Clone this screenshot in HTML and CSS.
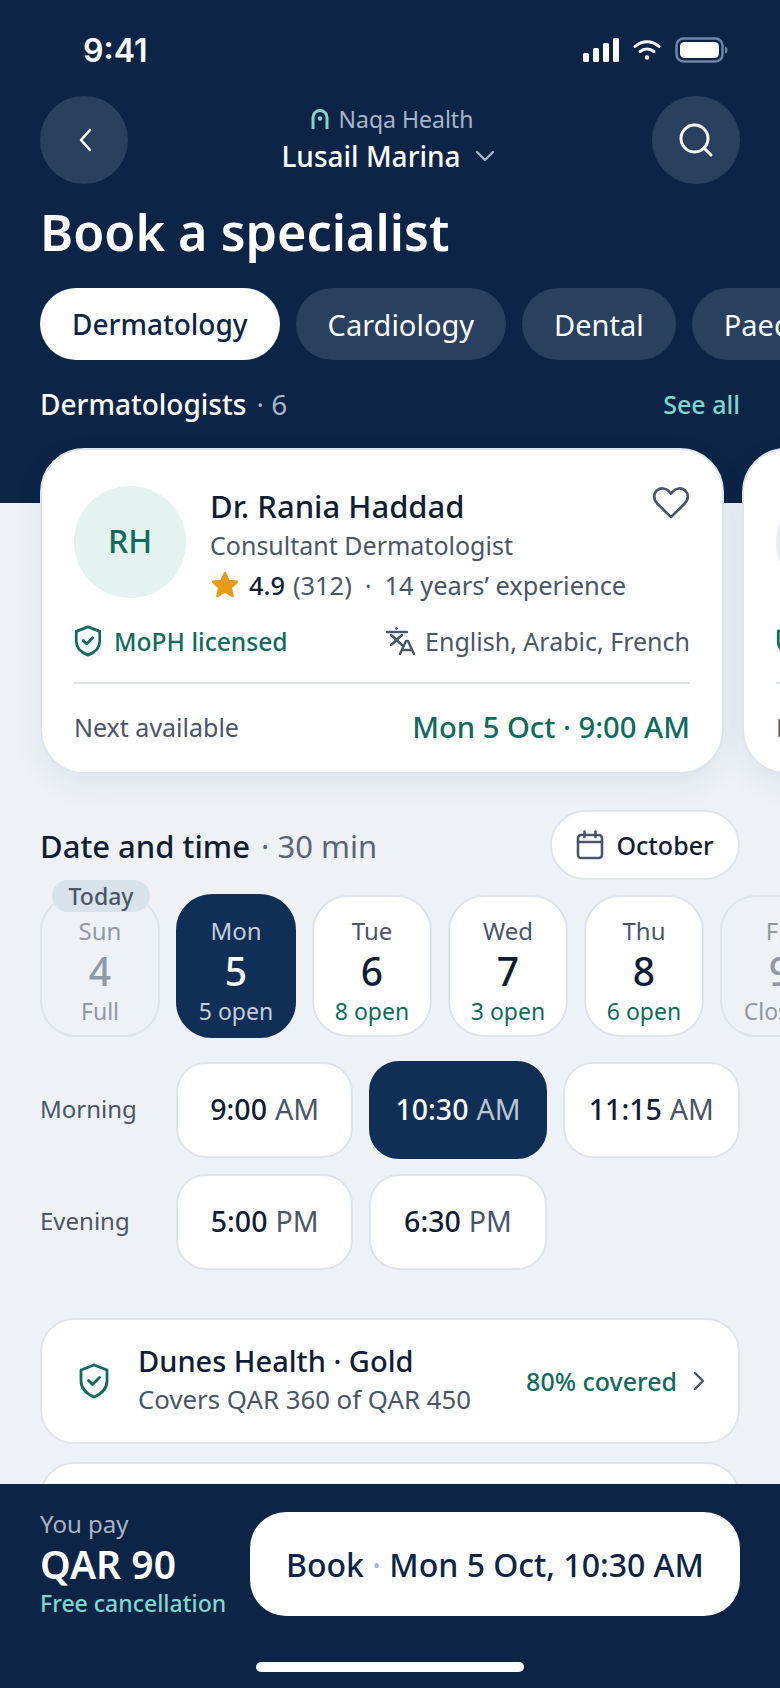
FILE: index.html
```html
<!DOCTYPE html>
<html lang="en">
<head>
<meta charset="utf-8">
<title>Book a specialist</title>
<link rel="stylesheet" href="styles.css">
</head>
<body>
<div class="app">
  <main class="scroll">
    <section class="hero">
      <div class="status">
        <span class="clock">9:41</span>
        <div class="status-icons">
          <svg width="36" height="24" viewBox="0 0 36 24" fill="#fff"><rect x="0" y="15" width="6" height="9" rx="1.5"/><rect x="10" y="10" width="6" height="14" rx="1.5"/><rect x="20" y="5" width="6" height="19" rx="1.5"/><rect x="30" y="0" width="6" height="24" rx="1.5"/></svg>
          <svg width="28" height="22" viewBox="0 0 28 22" fill="none" stroke="#fff" stroke-width="3" stroke-linecap="round"><path d="M2 7.5C9 1 19 1 26 7.5"/><path d="M7 12.5c4-3.500 10-3.500 14 0"/><circle cx="14" cy="18.500" r="1.500" fill="#fff" stroke-width="1.500"/></svg>
          <svg width="54" height="26" viewBox="0 0 54 26"><rect x="1.500" y="1.500" width="46" height="23" rx="7" fill="none" stroke="#6f86a6" stroke-width="2.500"/><rect x="5" y="5" width="39" height="16" rx="4.500" fill="#fff"/><path d="M50 9.500c2 .5 2.500 2 2.500 3.500s-.5 3-2.500 3.500z" fill="#6f86a6"/></svg>
        </div>
      </div>

      <div class="nav">
        <button class="round-btn" type="button" aria-label="Back">
          <svg class="back-icon" width="32" height="32" viewBox="0 0 32 32" fill="none" stroke="#fff" stroke-width="2.600" stroke-linecap="round" stroke-linejoin="round"><path d="M20 6 11 16l9 10"/></svg>
        </button>
        <div class="nav-center">
          <div class="brand">
            <svg width="18" height="22" viewBox="0 0 18 22" fill="none" stroke="#7fd6cf" stroke-width="3"><path d="M2 21V9.500a7 7 0 0 1 14 0V21"/><circle cx="9" cy="10.500" r="2.200" fill="#7fd6cf" stroke="none"/></svg>
            <span>Naqa Health</span>
          </div>
          <div class="place">
            <span>Lusail Marina</span>
            <svg width="20" height="14" viewBox="0 0 20 14" fill="none" stroke="#a7b5c9" stroke-width="2.400" stroke-linecap="round" stroke-linejoin="round"><path d="M2 3l8 8 8-8"/></svg>
          </div>
        </div>
        <button class="round-btn" type="button" aria-label="Search">
          <svg width="36" height="36" viewBox="0 0 36 36" fill="none" stroke="#fff" stroke-width="3" stroke-linecap="round"><circle cx="16.500" cy="16.500" r="13.500"/><path d="m26 26 7 7"/></svg>
        </button>
      </div>

      <h1 class="title">Book a specialist</h1>

      <div class="chips">
        <span class="chip chip-on">Dermatology</span>
        <span class="chip">Cardiology</span>
        <span class="chip">Dental</span>
        <span class="chip">Paediatrics</span>
      </div>

      <div class="list-head">
        <span class="list-title">Dermatologists <span class="list-count">· 6</span></span>
        <span class="see-all">See all</span>
      </div>
    </section>

    <section class="carousel">
      <article class="doc-card">
        <div class="doc-top">
          <div class="avatar">RH</div>
          <div class="doc-info">
            <div class="doc-name">Dr. Rania Haddad</div>
            <div class="doc-spec">Consultant Dermatologist</div>
            <div class="doc-rate">
              <svg width="30" height="30" viewBox="0 0 30 30" fill="#e69c17" stroke="#e69c17" stroke-width="2.500" stroke-linejoin="round"><path d="m15 3 3.600 8 8.400.8-6.300 5.700 1.900 8.500-7.600-4.500L7.400 26l1.900-8.500L3 11.800l8.400-.8z"/></svg>
              <b>4.9</b><span class="rate-count">(312)</span><span class="rate-sep">·</span><span>14 years’ experience</span>
            </div>
          </div>
          <svg class="heart" width="38" height="34" viewBox="0 0 40 36" fill="none" stroke="#4a5568" stroke-width="2.800" stroke-linejoin="round"><path d="M20 33 5.500 18.500C1 14 1.500 8 5 4.800c4-3.400 9.500-2.800 13 1L20 8l2-2.200c3.500-3.800 9-4.400 13-1 3.500 3.200 4 9.200-.5 13.700z"/></svg>
        </div>
        <div class="doc-meta">
          <div class="licence">
            <svg width="28" height="32" viewBox="0 0 26 30" fill="none" stroke="#0f6b5c" stroke-width="2.600" stroke-linecap="round" stroke-linejoin="round"><path d="M13 1.800 24 6v9c0 6.500-4.500 10.800-11 13.200C6.500 25.800 2 21.500 2 15V6z"/><path d="m8.500 14.500 3.200 3.200 5.800-5.700"/></svg>
            <span>MoPH licensed</span>
          </div>
          <div class="langs">
            <svg width="30" height="28" viewBox="0 0 30 28" fill="none" stroke="#4a5568" stroke-width="2.400" stroke-linecap="round" stroke-linejoin="round"><path d="M1 5h20"/><circle cx="10.500" cy="1.500" r="1" fill="#4a5568" stroke-width="1"/><path d="m5 8 11 10M16 8 5 18"/><path d="m14 27 6-13h2l6 13M16 23h10"/></svg>
            <span>English, Arabic, French</span>
          </div>
        </div>
        <div class="doc-next">
          <span class="next-label">Next available</span>
          <span class="next-date">Mon 5 Oct · 9:00 AM</span>
        </div>
      </article>

      <article class="doc-card">
        <div class="doc-top">
          <div class="avatar avatar-blue"></div>
        </div>
        <div class="doc-meta">
          <div class="licence">
            <svg width="28" height="32" viewBox="0 0 26 30" fill="none" stroke="#0f6b5c" stroke-width="2.600" stroke-linejoin="round"><path d="M13 1.800 24 6v9c0 6.500-4.500 10.800-11 13.200C6.500 25.800 2 21.500 2 15V6z"/></svg>
          </div>
        </div>
        <div class="doc-next">
          <span class="next-label">Next available</span>
        </div>
      </article>
    </section>

    <section class="schedule">
      <div class="date-head">
        <h2 class="date-title">Date and time <span class="date-dur">· 30 min</span></h2>
        <button class="month" type="button">
          <svg width="28" height="30" viewBox="0 0 28 30" fill="none" stroke="#4a5568" stroke-width="2.600" stroke-linecap="round" stroke-linejoin="round"><rect x="2" y="5" width="24" height="23" rx="3"/><path d="M2 12h24M8.500 1.500V7M19.500 1.500V7"/></svg>
          <span>October</span>
        </button>
      </div>

      <div class="days">
        <div class="day day-off"><span class="today">Today</span><span class="d-name">Sun</span><span class="d-num">4</span><span class="d-sub">Full</span></div>
        <div class="day day-on"><span class="d-name">Mon</span><span class="d-num">5</span><span class="d-sub">5 open</span></div>
        <div class="day"><span class="d-name">Tue</span><span class="d-num">6</span><span class="d-sub">8 open</span></div>
        <div class="day"><span class="d-name">Wed</span><span class="d-num">7</span><span class="d-sub">3 open</span></div>
        <div class="day"><span class="d-name">Thu</span><span class="d-num">8</span><span class="d-sub">6 open</span></div>
        <div class="day day-off"><span class="d-name">Fri</span><span class="d-num">9</span><span class="d-sub">Closed</span></div>
      </div>

      <div class="times">
        <span class="t-label">Morning</span>
        <div class="slot"><b>9:00</b> AM</div>
        <div class="slot slot-on"><b>10:30</b> AM</div>
        <div class="slot"><b>11:15</b> AM</div>
        <span class="t-label">Evening</span>
        <div class="slot"><b>5:00</b> PM</div>
        <div class="slot"><b>6:30</b> PM</div>
      </div>

      <div class="ins-card">
        <svg width="32" height="36" viewBox="0 0 32 36" fill="none" stroke="#0f6b5c" stroke-width="2.800" stroke-linecap="round" stroke-linejoin="round"><path d="M16 2 29 7v11c0 7.500-5.500 12.800-13 16C8.500 30.800 3 25.500 3 18V7z"/><path d="m10.500 17.500 4 4 7-7"/></svg>
        <div class="ins-text">
          <div class="ins-name">Dunes Health · Gold</div>
          <div class="ins-sub">Covers QAR 360 of QAR 450</div>
        </div>
        <span class="ins-cover">80% covered</span>
        <svg width="12" height="20" viewBox="0 0 12 20" fill="none" stroke="#4a5568" stroke-width="2.400" stroke-linecap="round" stroke-linejoin="round"><path d="m2 2 8 8-8 8"/></svg>
      </div>
      <div class="ins-card"></div>
    </section>
  </main>

  <footer class="footer">
    <div class="pay-row">
      <div class="pay">
        <span class="pay-label">You pay</span>
        <span class="pay-amount">QAR 90</span>
        <span class="pay-note">Free cancellation</span>
      </div>
      <button class="book" type="button">Book <span class="book-dot">·</span> Mon 5 Oct, 10:30 AM</button>
    </div>
    <div class="home-bar"></div>
  </footer>
</div>
</body>
</html>
```

FILE: styles.css
```css
* { box-sizing: border-box; }
html, body { margin: 0; padding: 0; }
body { font-family: "Noto Sans", "Liberation Sans", sans-serif; color: #0f1d33; background: #eef2f6; }
button { font-family: inherit; border: 0; padding: 0; }
h1, h2 { margin: 0; }

.app { width: 780px; height: 1688px; display: flex; flex-direction: column; overflow: hidden; background: #eef2f6; }
.scroll { flex: 1; min-height: 0; overflow: hidden; }

.hero { height: 503px; background: #0c2546; padding: 0 40px; color: #fff; }
.status { height: 96px; display: flex; justify-content: space-between; align-items: center; padding: 4px 11px 0 43px; }
.clock { font-family: Inter, "Liberation Sans", sans-serif; font-size: 32px; font-weight: 600; }
.status-icons { display: flex; align-items: center; gap: 14px; }

.nav { display: flex; justify-content: space-between; align-items: center; height: 88px; }
.round-btn { width: 88px; height: 88px; border-radius: 50%; background: #2a405f; display: flex; align-items: center; justify-content: center; }
.back-icon { margin-left: 4px; }
.nav-center { display: flex; flex-direction: column; align-items: center; padding-bottom: 4px; }
.brand { display: flex; align-items: center; gap: 10px; margin-left: 4px; font-size: 23px; line-height: 36px; color: #a7b5c9; }
.place { display: flex; align-items: center; gap: 14px; margin-right: 4px; font-size: 28px; line-height: 38px; font-weight: 500; }

.title { margin-top: 16px; font-size: 50.4px; line-height: 64px; font-weight: 600; }

.chips { display: flex; gap: 16px; margin-top: 24px; }
.chip { flex: none; height: 72px; padding: 0 32px; border-radius: 36px; background: #2a405f; display: flex; align-items: center; font-size: 29px; }
.chip-on { background: #fff; color: #0c2546; font-size: 28px; font-weight: 500; }

.list-head { display: flex; justify-content: space-between; align-items: center; height: 40px; margin-top: 24px; }
.list-title { font-size: 28px; font-weight: 500; }
.list-count { margin-left: 3px; color: #a7b5c9; font-weight: 400; }
.see-all { font-size: 25px; font-weight: 500; color: #7fd6cf; }

.carousel { display: flex; gap: 18px; margin-top: -55px; padding-left: 40px; }
.doc-card { flex: none; width: 684px; height: 326px; padding: 36px 32px 0; background: #fff; border: 2px solid #dfe5ec; border-radius: 44px; box-shadow: 0 10px 30px rgba(12, 37, 70, .07); }
.doc-top { display: flex; align-items: flex-start; height: 112px; }
.avatar { width: 112px; height: 112px; flex: none; border-radius: 50%; background: #e4f3ef; color: #0f6b5c; display: flex; align-items: center; justify-content: center; padding-bottom: 3px; font-size: 32px; font-weight: 500; }
.avatar-blue { background: #e3edf8; }
.doc-info { flex: 1; margin-left: 24px; }
.doc-name { font-size: 31px; line-height: 40px; font-weight: 500; }
.doc-spec { font-size: 25px; line-height: 36px; color: #4a5568; margin-top: 1px; }
.doc-rate { display: flex; align-items: center; font-size: 25.4px; line-height: 36px; color: #4a5568; margin-top: 4px; }
.doc-rate b { margin-left: 9px; font-weight: 500; color: #0f1d33; }
.rate-count { margin-left: 8px; }
.rate-sep { margin: 0 13px; }
.heart { flex: none; margin: 0; }

.doc-meta { display: flex; justify-content: space-between; align-items: center; height: 40px; margin-top: 23px; }
.licence { display: flex; align-items: center; gap: 12px; font-size: 24.6px; font-weight: 500; color: #0f6b5c; }
.langs { display: flex; align-items: center; gap: 9px; font-size: 25px; color: #4a5568; }

.doc-next { display: flex; justify-content: space-between; align-items: center; margin-top: 21px; padding: 21px 0 1px; border-top: 2px solid #dde2e8; height: 68px; }
.next-label { font-size: 25px; color: #4a5568; white-space: nowrap; }
.next-date { font-size: 29.2px; font-weight: 500; color: #0f6b5c; }

.schedule { padding: 0 40px; }
.date-head { display: flex; justify-content: space-between; align-items: center; height: 70px; margin-top: 36px; }
.date-title { padding-top: 2px; font-size: 31px; font-weight: 500; }
.date-dur { margin-left: 3px; color: #5a6578; font-weight: 400; }
.month { height: 70px; width: 190px; border-radius: 35px; background: #fff; border: 2px solid #e0e5ec; display: flex; align-items: center; justify-content: center; gap: 12px; font-size: 25px; font-weight: 500; color: #0f1d33; }

.days { display: flex; gap: 16px; margin-top: 15px; width: 820px; }
.day { position: relative; flex: none; width: 120px; height: 142px; border-radius: 36px; background: #fff; border: 2px solid #dfe4ea; display: flex; flex-direction: column; align-items: center; padding-top: 15px; }
.d-name { font-size: 24px; line-height: 38px; color: #4a5568; }
.d-num { font-size: 39px; line-height: 42px; font-weight: 500; color: #0f1d33; }
.d-sub { font-size: 23px; line-height: 38px; color: #0f6b5c; white-space: nowrap; }
.day-off { background: transparent; }
.day-off .d-name, .day-off .d-num, .day-off .d-sub { color: #8f98a6; }
.day-on { height: 144px; margin: -1px 0; padding-top: 16px; background: #102f56; border-color: #102f56; }
.day-on .d-name, .day-on .d-sub { color: #c4cedb; }
.day-on .d-num { color: #fff; }
.today { position: absolute; top: -17px; left: 10px; width: 98px; height: 32px; border-radius: 16px; background: #d8e2ea; display: flex; align-items: center; justify-content: center; font-size: 23px; font-weight: 500; color: #4a5568; }

.times { display: grid; grid-template-columns: 120px repeat(3, 1fr); gap: 16px; margin-top: 25px; }
.t-label { align-self: center; padding-bottom: 4px; font-size: 24px; color: #4a5568; }
.slot { height: 96px; border-radius: 30px; background: #fff; border: 2px solid #dfe4ea; display: flex; align-items: center; justify-content: center; gap: 8px; padding-bottom: 3px; font-size: 28.5px; color: #4a5568; }
.slot b { font-weight: 500; color: #0f1d33; }
.slot-on { height: 98px; margin: -1px 0; background: #102f56; border-color: #102f56; color: #b9c5d5; }
.slot-on b { color: #fff; }
.t-label:nth-of-type(5) { grid-column: 1; }

.ins-card { display: flex; align-items: center; height: 126px; margin-top: 48px; padding: 0 33px 2px 36px; border-radius: 34px; background: #fff; border: 2px solid #e0e5ec; }
.ins-card + .ins-card { margin-top: 18px; }
.ins-card > svg { margin-top: 2px; }
.ins-text { flex: 1; margin-left: 28px; }
.ins-name { font-size: 29px; line-height: 38px; font-weight: 500; }
.ins-sub { font-size: 25.8px; line-height: 38px; color: #4a5568; }
.ins-cover { font-size: 25px; font-weight: 500; color: #0f6b5c; margin: 2px 16px 0 0; }

.footer { flex: none; height: 204px; background: #0c2546; padding: 28px 40px 0; color: #fff; }
.pay-row { display: flex; justify-content: space-between; align-items: center; height: 104px; }
.pay { display: flex; flex-direction: column; }
.pay-label { font-size: 24px; line-height: 36px; color: #a7b5c9; }
.pay-amount { font-size: 39px; line-height: 43px; font-weight: 600; }
.pay-note { font-size: 23px; line-height: 37px; font-weight: 500; color: #7fd6cf; }
.book { width: 490px; height: 104px; border-radius: 36px; background: #fff; color: #0c2546; font-size: 32px; font-weight: 500; }
.book-dot { color: #a7b5c9; }
.home-bar { width: 268px; height: 10px; margin: 46px auto 0; border-radius: 5px; background: #fff; }
```
